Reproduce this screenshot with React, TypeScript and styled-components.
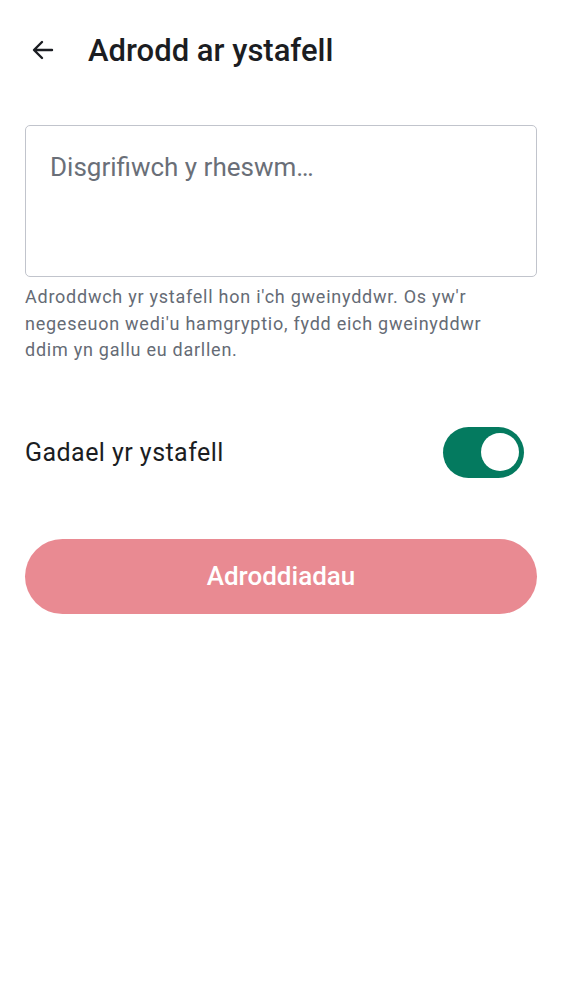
import React, { useState } from "react";
import styled, { createGlobalStyle } from "styled-components";

const GlobalStyle = createGlobalStyle`
  html, body {
    margin: 0;
    padding: 0;
    background: #ffffff;
    font-family: Roboto, "Noto Sans", "Liberation Sans", sans-serif;
  }
  * { box-sizing: border-box; }
`;

const Page = styled.div`
  width: 562px;
  min-height: 1000px;
  background: #ffffff;
  display: flex;
  flex-direction: column;
`;

const Header = styled.header`
  height: 100px;
  display: flex;
  align-items: center;
  padding: 0 0 0 31px;
  gap: 33px;
`;

const BackButton = styled.button`
  width: 24px;
  height: 24px;
  padding: 0;
  border: none;
  background: transparent;
  display: flex;
  align-items: center;
  justify-content: center;
  color: #1b1d22;
  cursor: pointer;
`;

const Title = styled.h1`
  margin: 0;
  font-size: 31px;
  font-weight: 500;
  color: #1b1d22;
  letter-spacing: 0;
`;

const Content = styled.main`
  display: flex;
  flex-direction: column;
  padding: 25px 25px 0 25px;
`;

const ReasonBox = styled.textarea`
  width: 100%;
  height: 152px;
  resize: none;
  border: 1.5px solid #c1c4cc;
  border-radius: 5px;
  padding: 26px 24px;
  font-family: Roboto, "Noto Sans", sans-serif;
  font-size: 26px;
  line-height: 30px;
  color: #1b1d22;
  outline: none;
  &::placeholder {
    color: #6a6f78;
  }
`;

const HelperText = styled.p`
  margin: 7px 0 0 0;
  padding-right: 24px;
  font-size: 18px;
  line-height: 26.5px;
  letter-spacing: 0.75px;
  color: #656b75;
`;

const ToggleRow = styled.div`
  margin-top: 63px;
  height: 51px;
  display: flex;
  align-items: center;
  justify-content: space-between;
  padding-right: 13px;
`;

const ToggleLabel = styled.span`
  font-size: 25px;
  color: #1b1d22;
  letter-spacing: 0.45px;
`;

const Track = styled.button<{ $on: boolean }>`
  width: 81px;
  height: 51px;
  border-radius: 26px;
  border: none;
  padding: 0 5px;
  background: ${(p) => (p.$on ? "#047a5f" : "#c3c6cd")};
  display: flex;
  align-items: center;
  justify-content: ${(p) => (p.$on ? "flex-end" : "flex-start")};
  cursor: pointer;
`;

const Thumb = styled.span`
  width: 38px;
  height: 38px;
  border-radius: 50%;
  background: #ffffff;
`;

const SubmitButton = styled.button`
  margin-top: 61px;
  width: 100%;
  height: 75px;
  border: none;
  border-radius: 38px;
  background: #e98a92;
  color: #ffffff;
  font-family: Roboto, "Noto Sans", sans-serif;
  font-size: 26px;
  font-weight: 500;
  cursor: pointer;
`;

export default function App() {
  const [leave, setLeave] = useState(true);
  return (
    <Page>
      <GlobalStyle />
      <Header>
        <BackButton aria-label="Back">
          <svg width="24" height="24" viewBox="0 0 24 24" fill="none">
            <path
              d="M21 12H4M11 4l-8 8 8 8"
              stroke="currentColor"
              strokeWidth="2.4"
              strokeLinecap="round"
              strokeLinejoin="round"
            />
          </svg>
        </BackButton>
        <Title>Adrodd ar ystafell</Title>
      </Header>
      <Content>
        <ReasonBox placeholder="Disgrifiwch y rheswm…" />
        <HelperText>
          Adroddwch yr ystafell hon i'ch gweinyddwr. Os yw'r negeseuon wedi'u
          hamgryptio, fydd eich gweinyddwr ddim yn gallu eu darllen.
        </HelperText>
        <ToggleRow>
          <ToggleLabel>Gadael yr ystafell</ToggleLabel>
          <Track $on={leave} onClick={() => setLeave(!leave)} aria-label="Gadael yr ystafell">
            <Thumb />
          </Track>
        </ToggleRow>
        <SubmitButton>Adroddiadau</SubmitButton>
      </Content>
    </Page>
  );
}
